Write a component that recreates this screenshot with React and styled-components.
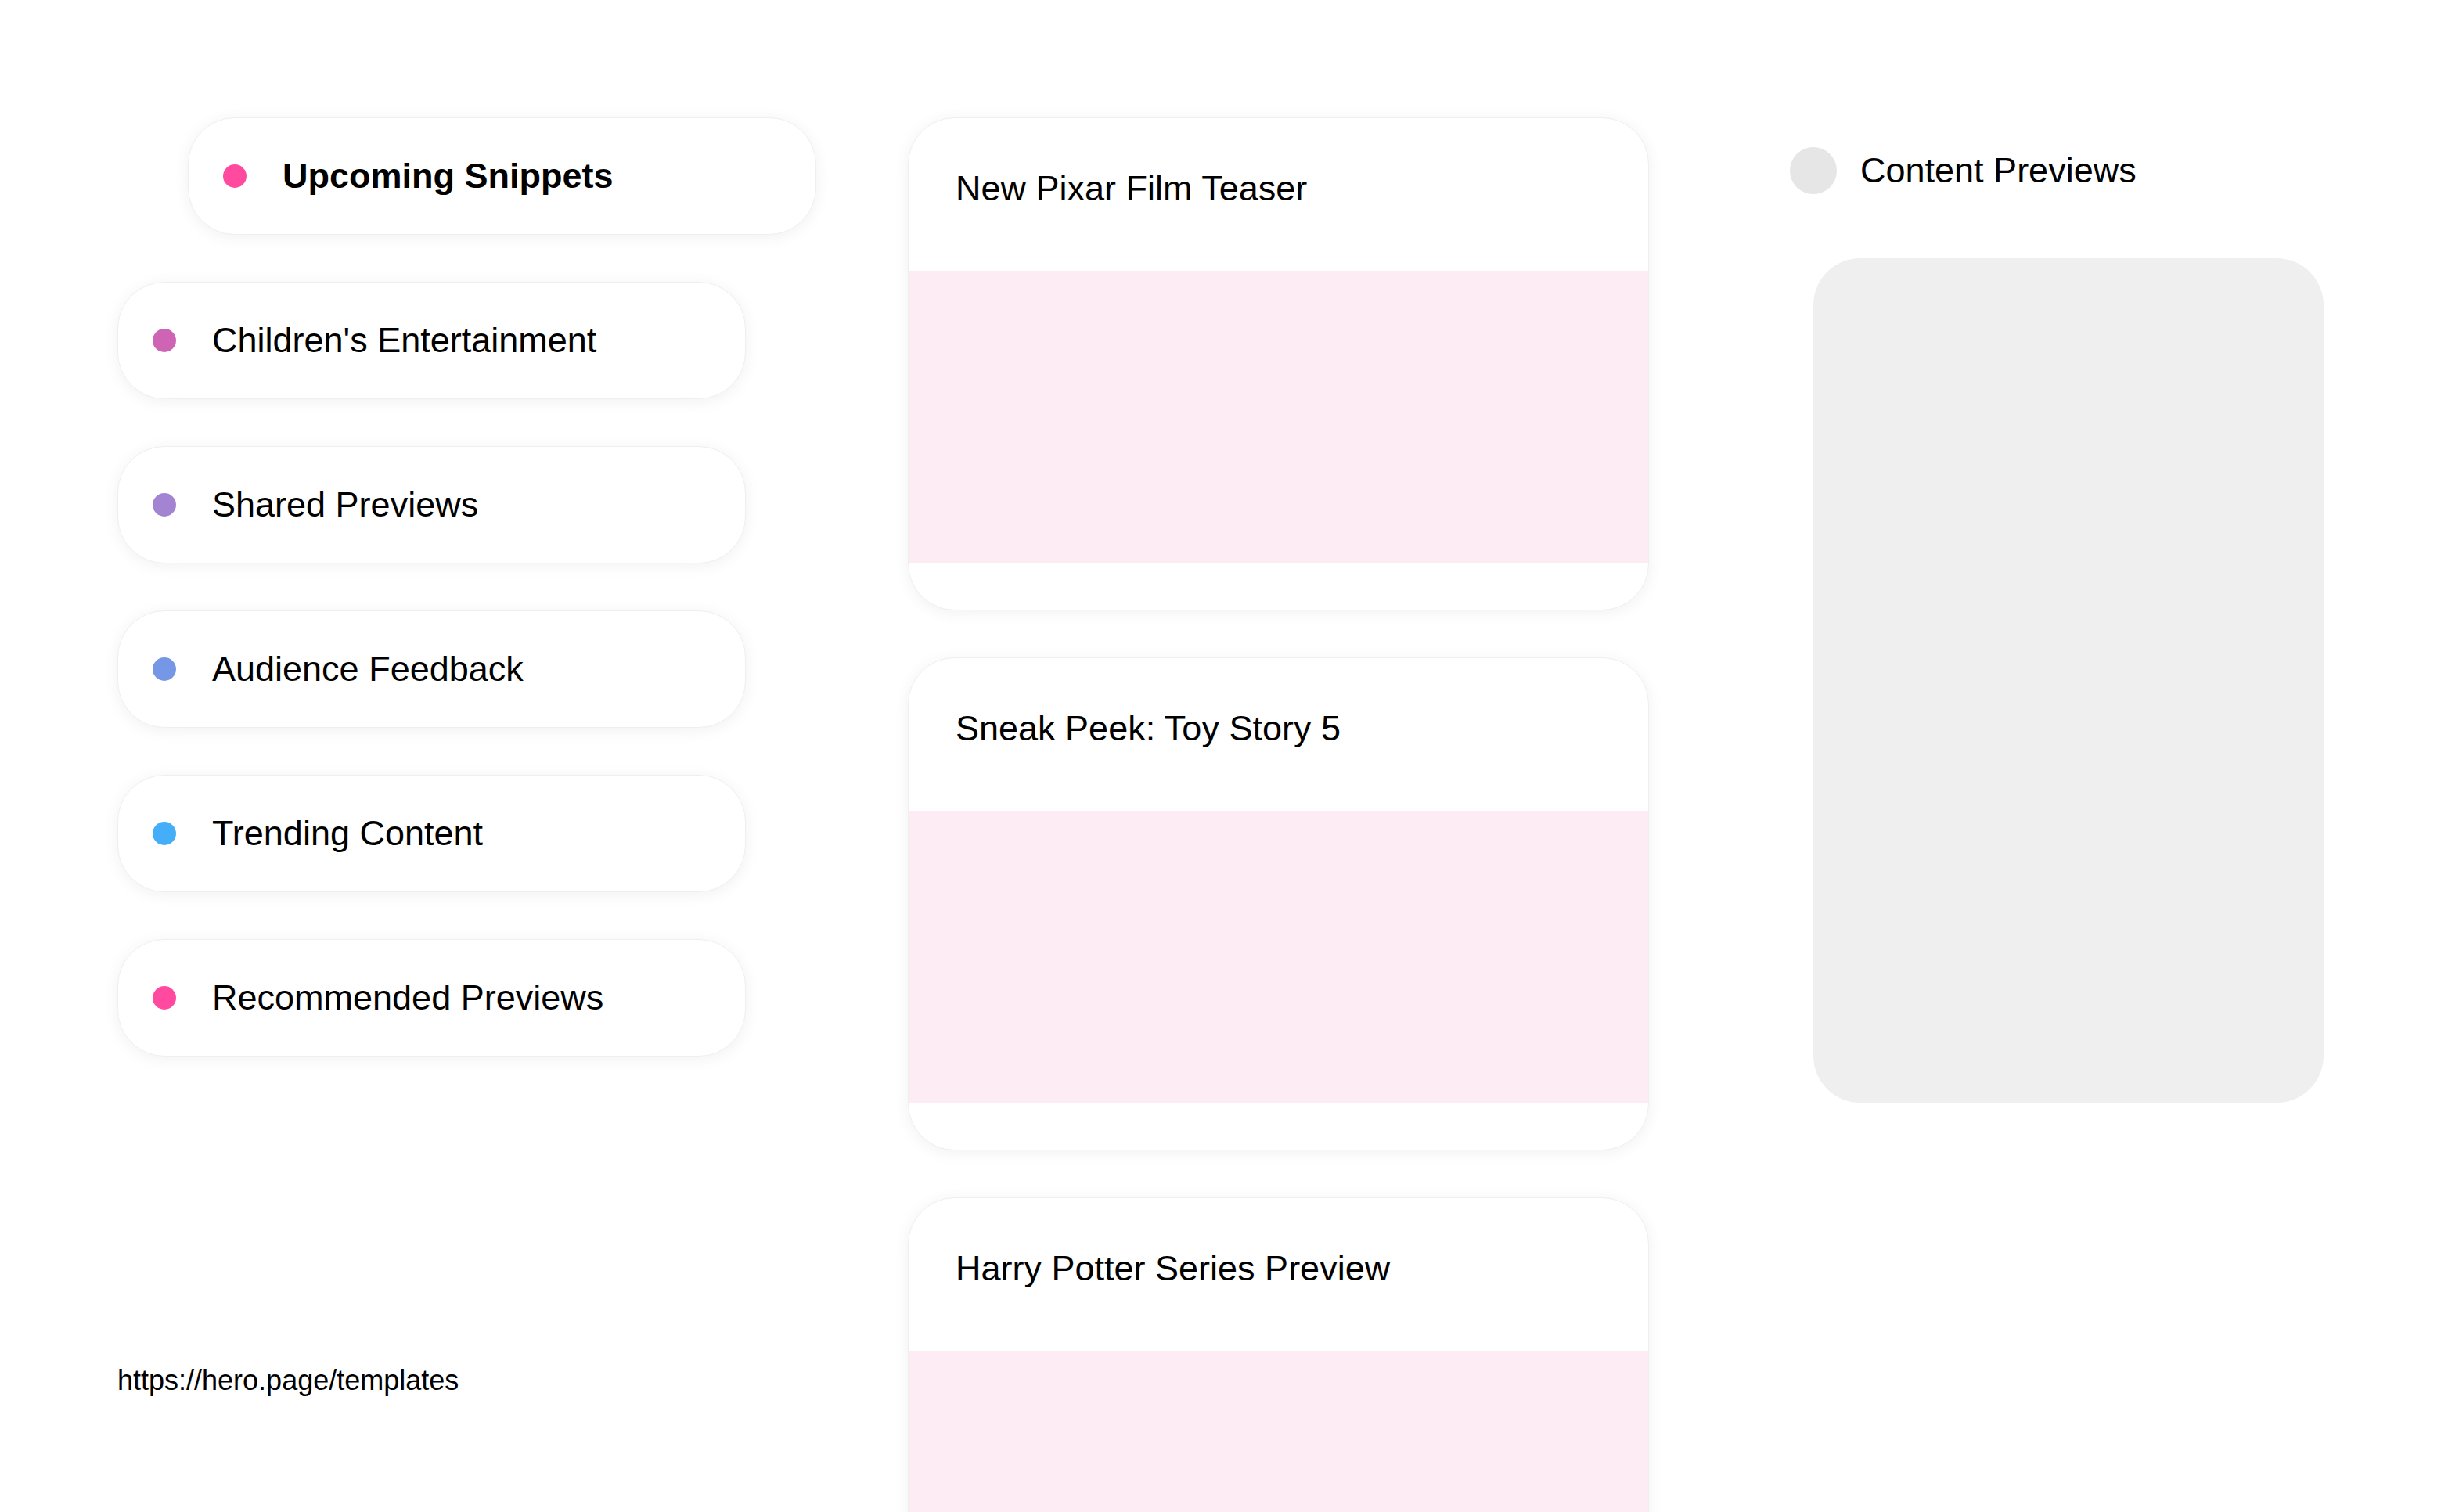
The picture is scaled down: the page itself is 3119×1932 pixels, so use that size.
import React from "react";
import styled, { createGlobalStyle } from "styled-components";

const Global = createGlobalStyle`
  html, body { margin: 0; padding: 0; background: #ffffff; }
  body { font-family: "Liberation Sans", Arial, sans-serif; color: #000; }
  * { box-sizing: border-box; }
`;

const Page = styled.div`
  display: flex;
  align-items: flex-start;
  padding: 150px 0 0 150px;
  min-height: 1932px;
`;

const LeftColumn = styled.div`
  width: 1010px;
  flex-shrink: 0;
  display: flex;
  flex-direction: column;
`;

const NavList = styled.ul`
  list-style: none;
  margin: 0;
  padding: 0;
  display: flex;
  flex-direction: column;
  gap: 60px;
`;

const NavItem = styled.li`
  width: 803px;
  height: 150px;
  display: flex;
  align-items: center;
  gap: 46px;
  padding-left: 44px;
  background: #fff;
  border: 1px solid #efefef;
  border-radius: 60px;
  box-shadow: 0 3px 20px rgba(0, 0, 0, 0.06);
  font-size: 45px;
  font-weight: ${(p) => (p.$active ? 700 : 400)};
  transform: translateX(${(p) => (p.$active ? "90px" : "0")});
`;

const Dot = styled.span`
  width: 30px;
  height: 30px;
  border-radius: 50%;
  flex-shrink: 0;
  background: ${(p) => p.$color};
`;

const FooterLink = styled.div`
  margin-top: 393px;
  font-size: 36px;
`;

const MiddleColumn = styled.div`
  width: 947px;
  flex-shrink: 0;
  display: flex;
  flex-direction: column;
  gap: 60px;
`;

const PreviewCard = styled.article`
  height: 630px;
  background: #fff;
  border: 1px solid #efefef;
  border-radius: 60px;
  box-shadow: 0 3px 20px rgba(0, 0, 0, 0.06);
  overflow: hidden;
  display: flex;
  flex-direction: column;
`;

const CardTitle = styled.h3`
  margin: 0;
  height: 195px;
  padding: 64px 60px 0 60px;
  font-size: 45px;
  font-weight: 400;
  line-height: 1.15;
`;

const CardMedia = styled.div`
  height: 374px;
  background: #fdecf4;
`;

const RightColumn = styled.div`
  margin-left: 180px;
  width: 682px;
  flex-shrink: 0;
  display: flex;
  flex-direction: column;
  padding-top: 38px;
`;

const PanelHeader = styled.div`
  display: flex;
  align-items: center;
  gap: 30px;
  font-size: 45px;
`;

const Avatar = styled.span`
  width: 60px;
  height: 60px;
  border-radius: 50%;
  background: #e6e6e6;
  flex-shrink: 0;
`;

const PanelBody = styled.div`
  margin-top: 82px;
  margin-left: 30px;
  width: 652px;
  height: 1079px;
  border-radius: 60px;
  background: #efefef;
`;

const navItems = [
  { label: "Upcoming Snippets", color: "#ff4a9f", active: true },
  { label: "Children's Entertainment", color: "#cf64b5" },
  { label: "Shared Previews", color: "#a384d3" },
  { label: "Audience Feedback", color: "#7597e6" },
  { label: "Trending Content", color: "#45aef8" },
  { label: "Recommended Previews", color: "#ff4a9f" },
];

const previews = [
  "New Pixar Film Teaser",
  "Sneak Peek: Toy Story 5",
  "Harry Potter Series Preview",
];

export default function App() {
  return (
    <>
      <Global />
      <Page>
        <LeftColumn>
          <NavList>
            {navItems.map((item) => (
              <NavItem key={item.label} $active={item.active}>
                <Dot $color={item.color} />
                {item.label}
              </NavItem>
            ))}
          </NavList>
          <FooterLink>https://hero.page/templates</FooterLink>
        </LeftColumn>
        <MiddleColumn>
          {previews.map((title) => (
            <PreviewCard key={title}>
              <CardTitle>{title}</CardTitle>
              <CardMedia />
            </PreviewCard>
          ))}
        </MiddleColumn>
        <RightColumn>
          <PanelHeader>
            <Avatar />
            Content Previews
          </PanelHeader>
          <PanelBody />
        </RightColumn>
      </Page>
    </>
  );
}
